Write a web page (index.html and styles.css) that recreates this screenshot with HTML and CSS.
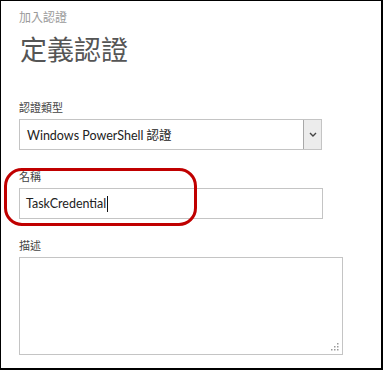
FILE: index.html
```html
<!DOCTYPE html>
<html lang="zh-Hant">
<head>
    <meta charset="UTF-8">
    <meta name="viewport" content="width=device-width, initial-scale=1.0">
    <title>加入認證</title>
    <link rel="stylesheet" href="styles.css">
</head>
<body>

    <!-- Dialog frame -->
    <div class="frame">
        <div class="breadcrumb">加入認證</div>
        <h1 class="title">定義認證</h1>

        <div class="form-group first">
            <div class="field-label">認證類型</div>
            <div class="select-box">
                <span class="select-text">Windows PowerShell 認證</span>
                <span class="select-btn">
                    <svg width="8" height="5" viewBox="0 0 8 5"><path d="M1 1 L4 4 L7 1" fill="none" stroke="#444" stroke-width="1.4"/></svg>
                </span>
            </div>
        </div>

        <div class="form-group">
            <div class="field-label">名稱</div>
            <div class="text-box">TaskCredential<span class="caret"></span></div>
        </div>

        <div class="form-group">
            <div class="field-label">描述</div>
            <div class="area-box">
                <svg class="grip" width="8" height="8" viewBox="0 0 8 8" fill="#9a9a9a">
                    <rect x="6" y="0" width="1.5" height="1.5"/>
                    <rect x="3" y="3" width="1.5" height="1.5"/>
                    <rect x="6" y="3" width="1.5" height="1.5"/>
                    <rect x="0" y="6" width="1.5" height="1.5"/>
                    <rect x="3" y="6" width="1.5" height="1.5"/>
                    <rect x="6" y="6" width="1.5" height="1.5"/>
                </svg>
            </div>
        </div>

        <!-- annotation ring drawn over the name field -->
        <div class="highlight"></div>
    </div>

</body>
</html>
```

FILE: styles.css
```css
body {
    margin: 0;
    padding: 0;
    background-color: #fff;
    font-family: "Noto Sans", "Noto Sans CJK TC", sans-serif;
}
.frame {
    position: relative;
    width: 383px;
    height: 370px;
    box-sizing: border-box;
    border-style: solid;
    border-color: #000;
    border-width: 1px 2px 2px 1px;
    padding: 9px 0 0 18px;
    background-color: #fff;
}
.breadcrumb {
    font-size: 12px;
    line-height: 16px;
    color: #9a9a9a;
}
.title {
    margin: 8px 0 0 1px;
    font-size: 27px;
    line-height: 32px;
    font-weight: normal;
    color: #555;
}
.form-group {
    margin-top: 19px;
}
.form-group.first {
    margin-top: 34px;
}
.field-label {
    font-size: 11px;
    line-height: 16px;
    color: #444;
    margin-bottom: 3px;
}
.select-box {
    display: flex;
    align-items: stretch;
    width: 303px;
    height: 31px;
    box-sizing: border-box;
    border: 1px solid #c4c4c4;
}
.select-text {
    flex: 1;
    display: flex;
    align-items: center;
    padding-left: 7px;
    font-family: Lato, "Noto Sans CJK TC", sans-serif;
    font-size: 12.5px;
    color: #222;
}
.select-btn {
    width: 17px;
    display: flex;
    align-items: center;
    justify-content: center;
    background-color: #ececec;
    border-left: 1px solid #a8a8a8;
}
.text-box {
    display: flex;
    align-items: center;
    width: 304px;
    height: 31px;
    box-sizing: border-box;
    border: 1px solid #c4c4c4;
    padding-left: 6px;
    font-family: Lato, "Noto Sans CJK TC", sans-serif;
    font-size: 12.5px;
    color: #222;
}
.caret {
    display: inline-block;
    width: 1px;
    height: 16px;
    margin-left: 1px;
    background-color: #111;
}
.area-box {
    position: relative;
    width: 324px;
    height: 98px;
    box-sizing: border-box;
    border: 1px solid #c4c4c4;
}
.grip {
    position: absolute;
    right: 3px;
    bottom: 3px;
}
.highlight {
    position: absolute;
    left: 3px;
    top: 167px;
    width: 193px;
    height: 58px;
    box-sizing: border-box;
    border: 3px solid #c00000;
    border-radius: 18px;
}
```
